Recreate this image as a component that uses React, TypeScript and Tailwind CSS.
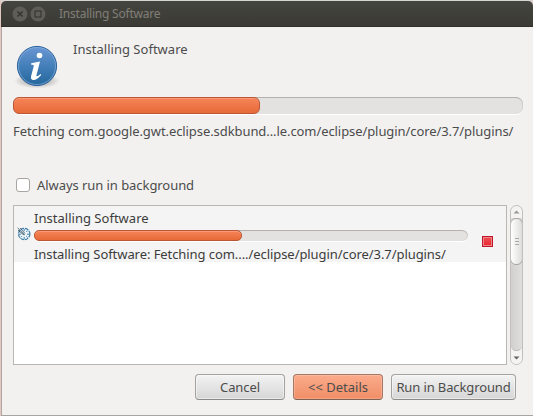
import type { ReactNode } from 'react';

function InfoIcon() {
  return (
    <svg width="48" height="48" viewBox="0 0 48 48" className="block">
      <defs>
        <linearGradient id="infoFill" x1="0" y1="0" x2="0" y2="1">
          <stop offset="0" stopColor="#6b97d3" />
          <stop offset="0.5" stopColor="#447fb9" />
          <stop offset="1" stopColor="#23669b" />
        </linearGradient>
        <radialGradient id="infoShade">
          <stop offset="0" stopColor="#000" stopOpacity="0.4" />
          <stop offset="1" stopColor="#000" stopOpacity="0" />
        </radialGradient>
      </defs>
      <ellipse cx="24" cy="39" rx="23" ry="7.5" fill="url(#infoShade)" />
      <circle cx="24" cy="24" r="19.6" fill="url(#infoFill)" stroke="#2c649c" strokeWidth="1" />
      <circle cx="24" cy="24" r="18.5" fill="none" stroke="#8bb1dd" strokeOpacity="0.65" strokeWidth="1" />
      <circle cx="26.5" cy="13.5" r="2.8" fill="#fff" />
      <path d="M18.2 21.3 L27 19.4 L23.4 33.6 Q23.3 35.6 27.6 32.1 L28.2 33.1 Q23.5 38.5 20 38 Q17.2 37.4 18.2 33.7 L20.8 23.9 Q21 22.5 18.2 22.8 Z" fill="#fff" />
    </svg>
  );
}

function TaskIcon() {
  return (
    <svg width="14" height="14" viewBox="0 0 14 14" className="block">
      <circle cx="7.2" cy="7" r="5.7" fill="#eef6fb" stroke="#4380a8" strokeWidth="1.2" strokeDasharray="3.6 0.9" />
      <path d="M7.2 2v2.2M7.2 10v2.2M2 7.2h2.2M10 7.2h2.2M10.6 3.6 9.2 5M10.6 10.4 9.2 9M3.8 10.4 5 9.2" stroke="#4380a8" strokeWidth="1" />
      <path d="M.6.9 7.9 8.1M1 3.2 7 8M3.2 1 8 6.6" stroke="#2b4c60" strokeWidth="0.8" />
    </svg>
  );
}

function WindowButton({ children }: { children: ReactNode }) {
  return (
    <svg width="16" height="16" viewBox="0 0 16 16" className="block">
      <circle cx="8" cy="8" r="7.5" fill="#5f5d57" />
      {children}
    </svg>
  );
}

const buttonBase =
  'flex h-[26px] items-center justify-center rounded-[4px] border pb-px text-[#4c4c4c] whitespace-nowrap';
const plain =
  'border-[#a4a29f] border-b-[#8d8b88] bg-linear-to-b from-[#f3f3f3] to-[#d6d6d6] shadow-[inset_0_0_0_1px_#ffffff77]';

export default function App() {
  return (
    <div className="flex h-[416px] w-[533px] flex-col overflow-hidden border-t border-t-[#d5d6d2] bg-[#e3c9c2] pl-px font-['Noto_Sans',sans-serif] text-[13px] leading-[18px] text-[#4c4c4c]">
      <header className="flex h-[26px] shrink-0 items-center rounded-t-[5px] border-b border-b-[#302f2b] bg-linear-to-b from-[#444540] to-[#3b3a35] pt-px pl-[11px]">
        <WindowButton>
          <path d="m5.4 5.4 5.2 5.2m0-5.2-5.2 5.2" stroke="#353430" strokeWidth="1.4" />
        </WindowButton>
        <div className="w-[2px]" />
        <WindowButton>
          <rect x="5" y="5" width="6" height="6" fill="none" stroke="#353430" strokeWidth="1.1" />
        </WindowButton>
        <h1 className="-mt-px ml-[13px] text-[12px] tracking-[-0.22px] text-[#817e77]">Installing Software</h1>
      </header>

      <main className="flex min-h-0 flex-1 flex-col border-b border-l border-b-[#a8a4a0] border-l-[#b0a5a1] bg-[#f2f1f0] pr-[10px] pl-[11px]">
        <div className="flex h-[69px] shrink-0 pt-[13px]">
          <div className="mt-[2px]">
            <InfoIcon />
          </div>
          <p className="ml-3 tracking-[0.02px]">Installing Software</p>
        </div>

        <div className="mt-px h-[18px] shrink-0 rounded-[7px] border-t border-b border-t-[#b5b1ae] border-b-white bg-[#e3e2e0] shadow-[inset_-1px_0_0_#d3d1cf]">
          <div className="-mt-px h-[17px] w-[247px] rounded-[6px] border border-[#bb5736] bg-linear-to-b from-[#f58458] to-[#e86a38] shadow-[inset_0_1px_0_#fa9a77]" />
        </div>
        <p className="mt-[7px] h-[18px] shrink-0 whitespace-nowrap tracking-[-0.08px]">
          Fetching com.google.gwt.eclipse.sdkbund...le.com/eclipse/plugin/core/3.7/plugins/
        </p>

        <label className="mt-[36px] flex h-[18px] shrink-0 items-center">
          <span className="ml-[3px] h-[14px] w-[14px] rounded-[3px] border border-[#a9a5a1] bg-white" />
          <span className="ml-[7px] tracking-[-0.06px]">Always run in background</span>
        </label>

        <div className="mt-[11px] flex h-[160px] shrink-0 gap-[3px]">
          <section className="w-[494px] border border-[#bab7b1] bg-white text-[#3c3c3c]">
            <div className="flex h-[56px] items-start bg-[#f4f4f4]">
              <div className="mt-[21px] ml-[3px] w-[17px]">
                <TaskIcon />
              </div>
              <div className="w-[434px] pt-[3px]">
                <p className="h-[18px] tracking-[0.02px]">Installing Software</p>
                <div className="mt-[3px] h-[12px] rounded-[6px] border-t border-b border-t-[#b5b1ae] border-b-white bg-[#e3e2e0] shadow-[inset_-1px_0_0_#d3d1cf]">
                  <div className="-mt-px h-[11px] w-[208px] rounded-[5px] border border-[#bb5736] bg-linear-to-b from-[#f58458] to-[#e86a38] shadow-[inset_0_1px_0_#fa9a77]" />
                </div>
                <p className="mt-[3px] h-[18px] whitespace-nowrap tracking-[-0.07px]">
                  Installing Software: Fetching com..../eclipse/plugin/core/3.7/plugins/
                </p>
              </div>
              <div className="mt-[30px] ml-[14px] h-[11px] w-[11px] border border-[#bd1729] bg-linear-to-b from-[#ed5055] to-[#eb1c2d] shadow-[inset_0_0_0_1px_#ee858a]" />
            </div>
          </section>

          <div className="flex w-[13px] flex-col overflow-hidden rounded-[7px] border border-[#c1bebb] bg-[#dcdad8]">
            <div className="flex h-[12px] shrink-0 items-center justify-center bg-[#f4f3f2]">
              <svg width="7" height="4"><path d="M.5 3.5 3.5.5l3 3z" fill="#999794" /></svg>
            </div>
            <div className="-mx-px flex h-[47px] shrink-0 flex-col items-center justify-center gap-[2px] rounded-[6px] border border-[#a7a4a1] bg-linear-to-r from-white to-[#dedddc]">
              <i className="h-px w-[4px] bg-[#aaa]" />
              <i className="h-px w-[4px] bg-[#aaa]" />
              <i className="h-px w-[4px] bg-[#aaa]" />
            </div>
            <div className="flex flex-1 bg-[#f4f3f2]">
              <div className="-mt-[8px] flex-1 rounded-b-[6px] border-b border-b-[#b9b6b3] bg-linear-to-r from-[#d2d0ce] to-[#e0dedc] [clip-path:inset(8px_0_0_0)]" />
            </div>
            <div className="flex h-[13px] shrink-0 items-center justify-center bg-[#f4f3f2]">
              <svg width="7" height="4"><path d="M.5.5h6l-3 3z" fill="#666461" /></svg>
            </div>
          </div>
        </div>

        <footer className="mt-[9px] mr-[7px] flex justify-end gap-[8px]">
          <button className={`${buttonBase} ${plain} w-[90px] tracking-[-0.1px]`}>Cancel</button>
          <button className={`${buttonBase} w-[90px] border-[#a77763] border-b-[#80604f] bg-linear-to-b from-[#fbab8b] to-[#f08e67] shadow-[inset_0_0_0_1px_#ffffff33]`}>
            &lt;&lt; Details
          </button>
          <button className={`${buttonBase} ${plain} w-[125px]`}>
            <span className="tracking-[-0.12px]">Run in Background</span>
          </button>
        </footer>
      </main>
    </div>
  );
}
